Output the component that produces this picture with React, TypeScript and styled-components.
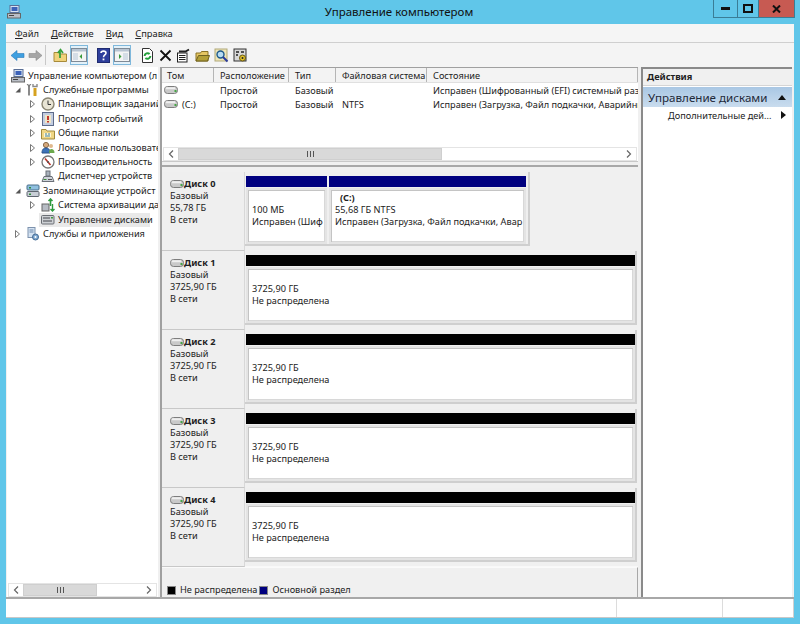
import React from "react";
import styled, { createGlobalStyle } from "styled-components";

const Global = createGlobalStyle`
  html, body { margin: 0; padding: 0; background: #5fc6e8; }
  * { box-sizing: border-box; }
`;

const Win = styled.div`
  width: 800px; height: 624px; background: #60c6e9; display: flex; flex-direction: column;
  font-family: "Noto Sans", "Liberation Sans", sans-serif; font-size: 9.2px; color: #222; overflow: hidden;
`;
const TitleBar = styled.div`
  height: 24px; flex: none; display: flex; align-items: flex-start; padding-left: 7px;
`;
const AppIcon = styled.div` margin-top: 5px; width: 14px; height: 14px; flex: none; `;
const Title = styled.div`
  flex: 1; text-align: center; font-size: 11.5px; line-height: 24px; color: #111; padding-left: 64px;
`;
const Caption = styled.div`
  display: flex; height: 18px; margin-right: 5px; border: 1px solid #3a7d96; border-top: 0; flex: none;
`;
const CapBtn = styled.div<{ $w: number; $close?: boolean }>`
  width: ${(p) => p.$w}px; display: flex; align-items: center; justify-content: center;
  background: ${(p) => (p.$close ? "#c75a52" : "transparent")};
  border-left: 1px solid #3a7d96;
  &:first-child { border-left: 0; }
`;
const Client = styled.div`
  flex: 1; margin: 0 6px 6px; background: #f0f0f0; display: flex; flex-direction: column; min-height: 0;
`;
const MenuBar = styled.div`
  height: 19px; flex: none; background: #f5f5f5; border-bottom: 1px solid #cfcfcf; display: flex; align-items: center; padding-left: 9px; gap: 12px;
  font-size: 9.3px; padding-top: 1px;
`;
const MenuItem = styled.span` u { text-decoration: underline; text-underline-offset: 1px; } `;
const Toolbar = styled.div`
  height: 24px; flex: none; background: #f4f4f4; display: flex; align-items: center; padding-left: 2px;
`;
const ToolBtn = styled.div<{ $w?: number; $on?: boolean; $ml?: number }>`
  width: ${(p) => p.$w ?? 18}px; height: 20px; flex: none; display: flex; align-items: center; justify-content: center;
  margin-left: ${(p) => p.$ml ?? 0}px;
  ${(p) => (p.$on ? "background:#e3f1f9;border:1px solid #7fb8dc;" : "")}
`;
const ToolSep = styled.div<{ $ml: number; $mr: number }>`
  width: 1px; height: 20px; background: #c8c8c8; flex: none; margin-left: ${(p) => p.$ml}px; margin-right: ${(p) => p.$mr}px;
`;
const Main = styled.div`
  flex: 1; min-height: 0; display: flex; background: #f0f0f0; border-bottom: 2px solid #a8a8a8;
`;
const TreePane = styled.div`
  width: 151px; flex: none; margin-left: 1px; background: #fff; display: flex; flex-direction: column;
`;
const TreeList = styled.div` flex: 1; padding-top: 1.5px; overflow: hidden; `;
const TreeRow = styled.div<{ $level: number }>`
  height: 14.4px; display: flex; align-items: center; white-space: nowrap; overflow: hidden;
  padding-left: ${(p) => [4, 7, 22][p.$level]}px;
`;
const Twisty = styled.span`
  width: 7px; height: 14px; flex: none; display: flex; align-items: center; justify-content: center; margin-right: 5px;
`;
const TreeIcon = styled.span` width: 14px; height: 14px; flex: none; display: flex; align-items: center; justify-content: center; margin-right: 2px; `;
const TreeLabel = styled.span` line-height: 14px; padding: 0 3px 0 1px; `;
const Selected = styled.span`
  display: flex; align-items: center; background: #e9e9e9; margin-left: -2px; padding-left: 2px; height: 14px; width: 111px;
`;
const HScroll = styled.div`
  height: 14px; flex: none; display: flex; background: #fff; border: 1px solid #e4e4e4; margin: 0 1px;
`;
const ScrollBtn = styled.div`
  width: 14px; flex: none; display: flex; align-items: center; justify-content: center; background: #fff;
`;
const Thumb = styled.div<{ $w: number }>`
  width: ${(p) => p.$w}px; flex: none; background: #d9d9d9; border: 1px solid #cfcfcf; display: flex; align-items: center; justify-content: center;
`;
const Track = styled.div` flex: 1; background: #fff; `;
const Grip = styled.div`
  width: 7px; height: 6px; background: repeating-linear-gradient(90deg, #555 0 1px, transparent 1px 3px);
`;
const MiddlePane = styled.div`
  width: 478px; flex: none; margin-left: 2px; display: flex; flex-direction: column; border-left: 2px solid #a0a0a0; border-top: 1px solid #a0a0a0;
`;
const ListPane = styled.div` height: 93px; flex: none; background: #fff; display: flex; flex-direction: column; `;
const HeaderRow = styled.div` height: 15px; flex: none; display: flex; background: #f3f3f3; border-bottom: 1px solid #e0e0e0; `;
const HeadCell = styled.div<{ $w: number }>`
  width: ${(p) => p.$w}px; flex: none; padding-left: 6px; line-height: 15px; border-right: 1px solid #b5b5b5; white-space: nowrap; overflow: hidden;
  &:first-child { padding-left: 5px; }
`;
const Rows = styled.div` flex: 1; `;
const Row = styled.div` height: 14px; display: flex; align-items: center; `;
const Cell = styled.div<{ $w: number }>`
  width: ${(p) => p.$w}px; flex: none; padding-left: 6px; display: flex; align-items: center; gap: 4px; white-space: nowrap; overflow: hidden;
`;
const VolCell = styled(Cell)` padding-left: 2px; `;
const Splitter = styled.div`
  height: 6px; flex: none; background: #f0f0f0; border-top: 1px solid #c8c8c8; border-bottom: 2px solid #a8a8a8;
`;
const Graph = styled.div` height: 400px; flex: none; padding-top: 5px; background: #f0f0f0; border-bottom: 1px solid #f8f8f8; `;
const DiskRow = styled.div` height: 79px; display: flex; `;
const DiskLabel = styled.div`
  width: 83px; flex: none; padding: 6px 0 0 8px; line-height: 12.2px; border-bottom: 1px solid #c8c8c8; border-right: 1px solid #d8d8d8; background: #efefef;
`;
const DiskName = styled.div` display: flex; align-items: center; font-weight: 700; height: 11.5px; white-space: nowrap; `;
const Vols = styled.div<{ $w: number }>`
  width: ${(p) => p.$w}px; height: 74px; padding: 4px 0 0 1px; flex: none; display: flex; gap: 2px; background: #efefef; border-right: 2px solid #cfcfcf; border-bottom: 2px solid #cfcfcf;
`;
const Vol = styled.div<{ $w: number }>` width: ${(p) => p.$w}px; flex: none; display: flex; flex-direction: column; `;
const Bar = styled.div<{ $c: string }>` height: 11px; flex: none; background: ${(p) => p.$c}; `;
const VolBody = styled.div<{ $top: number }>`
  margin-top: 1px; height: 57px; background: #fff; border: 2px solid #e4e4e4; box-shadow: inset 1px 1px 0 #c4c4c4, inset -1px -1px 0 #d8d8d8;
  padding: ${(p) => p.$top}px 0 0 4px; display: flex; flex-direction: column; line-height: 12.2px; white-space: nowrap; overflow: hidden;
`;
const VolName = styled.div` font-weight: 700; padding-left: 5px; `;
const Legend = styled.div`
  flex: 1; display: flex; align-items: flex-end; padding: 0 0 1px 5px; background: #f0f0f0; border-right: 1px solid #a8a8a8; gap: 4px;
  border-top: 1px solid #fafafa;
`;
const Swatch = styled.div<{ $c: string; $ml?: number }>`
  width: 9px; height: 9px; background: ${(p) => p.$c}; border: 1px solid #888; margin-bottom: 1px; margin-left: ${(p) => p.$ml ?? 0}px;
`;
const LegendText = styled.span` line-height: 13px; `;
const ActionsPane = styled.div`
  flex: 1; margin-left: 3px; background: #fff; border-left: 2px solid #8a8a8a; border-top: 2px solid #8a8a8a; display: flex; flex-direction: column; margin-right: 2px;
`;
const ActHead = styled.div`
  height: 17px; background: #f0f0f0; font-weight: 700; padding-left: 4px; line-height: 15px; border-bottom: 1px solid #d5d5d5; flex: none;
`;
const ActSub = styled.div`
  height: 20px; margin-top: 1px; background: linear-gradient(#a9c7e4, #c9dcee); font-size: 11.6px; display: flex; align-items: center; justify-content: space-between; padding: 0 6px 0 5px; color: #1e2a3a; flex: none;
`;
const ActItem = styled.div`
  height: 16px; display: flex; align-items: center; justify-content: space-between; padding: 0 6px 0 25px;
`;
const StatusBar = styled.div`
  height: 19px; flex: none; background: #fff; display: flex; border-bottom: 1px solid #c8c8c8; border-right: 1px solid #d0d0d0;
`;
const StatusCell = styled.div<{ $w?: number }>`
  ${(p) => (p.$w ? `width:${p.$w}px;flex:none;` : "flex:1;")} border-right: 1px solid #dcdcdc;
  &:last-child { border-right: 0; }
`;

const Tri = ({ dir = "r" }: { dir?: "r" | "open" }) =>
  dir === "open" ? (
    <svg width="6" height="6" viewBox="0 0 6 6"><path d="M5.5 0.5V5.5H0.5Z" fill="#555" /></svg>
  ) : (
    <svg width="5" height="8" viewBox="0 0 5 8"><path d="M0.5 0.5L4.5 4L0.5 7.5Z" fill="#fff" stroke="#777" /></svg>
  );

const DiskIco = ({ w = 14 }: { w?: number }) => (
  <svg width={w} height="8" viewBox="0 0 14 8" style={{ flex: "none" }}>
    <rect x="0.5" y="0.5" width="13" height="7" rx="3" fill="#c9c9c9" stroke="#7d7d7d" />
    <rect x="1.5" y="1.3" width="10" height="2" rx="1" fill="#efefef" />
    <rect x="10.5" y="4" width="2" height="2" fill="#45a545" />
  </svg>
);

const Ic = ({ k }: { k: string }) => {
  const s = { width: 14, height: 14, viewBox: "0 0 14 14" };
  switch (k) {
    case "computer":
      return (
        <svg {...s}>
          <rect x="3" y="0.5" width="9" height="7" fill="#d8e4f2" stroke="#5a6f96" />
          <rect x="4.5" y="2" width="6" height="4" fill="#3c62b8" />
          <rect x="0.5" y="8.5" width="13" height="4.5" fill="#b9bec6" stroke="#666" />
          <rect x="2" y="10" width="5" height="1" fill="#444" />
        </svg>
      );
    case "tools":
      return (
        <svg {...s}>
          <path d="M3 1.5V12.5" stroke="#8a8a8a" strokeWidth="2" />
          <path d="M1 1L3 3.5L5 1" stroke="#777" fill="none" />
          <path d="M9 5V13" stroke="#d6a21f" strokeWidth="3" />
          <path d="M7 1V3.5H11V1" stroke="#8a8a8a" fill="none" strokeWidth="1.4" />
        </svg>
      );
    case "clock":
      return (
        <svg {...s}>
          <circle cx="7" cy="7" r="6" fill="#e8e4d4" stroke="#8b8672" strokeWidth="1.4" />
          <path d="M7 3.5V7.5H10" stroke="#333" fill="none" />
        </svg>
      );
    case "event":
      return (
        <svg {...s}>
          <rect x="1.5" y="0.5" width="11" height="13" fill="#c3cde0" stroke="#5d6b8a" />
          <rect x="4" y="3" width="6" height="8" fill="#f0e6c6" />
          <rect x="6" y="4" width="2" height="4" fill="#c2362e" />
          <rect x="6" y="9" width="2" height="1.5" fill="#c2362e" />
        </svg>
      );
    case "share":
      return (
        <svg {...s}>
          <path d="M0.5 3.5H5L6 5H13.5V13H0.5Z" fill="#f0d684" stroke="#a08a3e" />
          <rect x="3" y="7" width="7" height="4" fill="#fff6d0" />
          <path d="M4 8H6M7 8H9M4 10H9" stroke="#3a7fa0" />
        </svg>
      );
    case "users":
      return (
        <svg {...s}>
          <circle cx="5" cy="4" r="2.6" fill="#d6a97c" stroke="#8a6b4a" />
          <path d="M1 12C1 8 3 7 5 7S9 8 9 12Z" fill="#3d72b8" stroke="#2a5088" />
          <circle cx="10" cy="5" r="2" fill="#e0b88c" />
          <path d="M8 12C8 9 9 8 10.5 8S13.5 9 13.5 12Z" fill="#6ca84c" />
        </svg>
      );
    case "perf":
      return (
        <svg {...s}>
          <circle cx="7" cy="7" r="6" fill="#fff" stroke="#777" strokeWidth="1.3" />
          <path d="M4 3.5L9.5 10" stroke="#b8332a" strokeWidth="1.6" />
          <circle cx="7" cy="7" r="1" fill="#555" />
        </svg>
      );
    case "device":
      return (
        <svg {...s}>
          <path d="M1 12.5L3 7.5H11L13 12.5Z" fill="#cfd3da" stroke="#6b7078" />
          <rect x="5" y="2" width="4" height="5" fill="#a9b2bd" stroke="#6b7078" />
          <rect x="2.5" y="10" width="3" height="1" fill="#3a8a3a" />
          <rect x="7" y="10" width="4" height="1" fill="#555" />
        </svg>
      );
    case "storage":
      return (
        <svg {...s}>
          <rect x="1" y="1" width="12" height="5" rx="1" fill="#8fc0e0" stroke="#4a6f8a" />
          <rect x="1" y="7.5" width="12" height="5" rx="1" fill="#c8ced6" stroke="#5f6670" />
          <rect x="3" y="3" width="2" height="1.5" fill="#2f8a3c" />
          <rect x="3" y="9.5" width="2" height="1.5" fill="#2f8a3c" />
        </svg>
      );
    case "backup":
      return (
        <svg {...s}>
          <rect x="1" y="6" width="7" height="7" fill="#b7bcc4" stroke="#666" />
          <path d="M9.5 1V8M7.5 3L9.5 1L11.5 3" stroke="#2e9a3e" strokeWidth="1.6" fill="none" />
          <path d="M11.5 6V13M9.5 11L11.5 13L13.5 11" stroke="#2e9a3e" strokeWidth="1.4" fill="none" />
        </svg>
      );
    case "diskmgmt":
      return (
        <svg {...s}>
          <rect x="0.5" y="2.5" width="12.5" height="8.5" rx="1" fill="#cdd0d4" stroke="#6a6e74" />
          <path d="M2 5H9M2 8H11" stroke="#44474c" />
          <rect x="10" y="4" width="2" height="1.5" fill="#3e9a3e" />
        </svg>
      );
    case "services":
      return (
        <svg {...s}>
          <rect x="2" y="0.5" width="7" height="10" fill="#d5e3f2" stroke="#7d92ad" />
          <path d="M3.5 3H7.5M3.5 5H7.5" stroke="#6d88ac" />
          <circle cx="9.5" cy="10" r="3" fill="#7fa8d0" stroke="#456b95" />
          <circle cx="9.5" cy="10" r="1" fill="#fff" />
        </svg>
      );
    default:
      return null;
  }
};

const Tb = ({ k }: { k: string }) => {
  const s = { width: 15, height: 15, viewBox: "0 0 15 15" };
  switch (k) {
    case "back":
      return <svg {...s}><path d="M1 7.5L7 2.5V5.5H14V9.5H7V12.5Z" fill="#3e9fe0" stroke="#2a78b8" strokeWidth="0.6" /></svg>;
    case "fwd":
      return <svg {...s}><path d="M14 7.5L8 2.5V5.5H1V9.5H8V12.5Z" fill="#a6a6a6" stroke="#8a8a8a" strokeWidth="0.6" /></svg>;
    case "up":
      return (
        <svg {...s}>
          <path d="M1 4.5H6L7 6H13.5V13.5H1Z" fill="#f0d27a" stroke="#a78a3a" />
          <path d="M7 10V3.5M4.8 5L7.5 1.8L10 5" stroke="#38a03c" strokeWidth="1.8" fill="none" />
        </svg>
      );
    case "panelL":
      return (
        <svg width="16" height="14" viewBox="0 0 16 14">
          <rect x="0.5" y="0.5" width="15" height="13" fill="#f4f4f4" stroke="#7f8a96" />
          <rect x="1" y="1" width="14" height="2.5" fill="#b8c4d2" />
          <rect x="2" y="5" width="5" height="7" fill="#d5dde6" />
          <path d="M11 6L8.5 8.5L11 11Z" fill="#3a9a3a" />
        </svg>
      );
    case "panelR":
      return (
        <svg width="16" height="14" viewBox="0 0 16 14">
          <rect x="0.5" y="0.5" width="15" height="13" fill="#f4f4f4" stroke="#7f8a96" />
          <rect x="1" y="1" width="14" height="2.5" fill="#b8c4d2" />
          <rect x="9" y="5" width="5" height="7" fill="#d5dde6" />
          <path d="M5 6L7.5 8.5L5 11Z" fill="#3a9a3a" />
        </svg>
      );
    case "help":
      return (
        <svg width="13" height="15" viewBox="0 0 13 15">
          <rect x="0.5" y="0.5" width="12" height="14" fill="#2f3f9c" stroke="#1f2b70" />
          <path d="M4 5C4 2.5 9 2.5 9 5C9 7 6.5 7 6.5 9.3" stroke="#fff" strokeWidth="1.6" fill="none" />
          <rect x="5.6" y="10.5" width="1.8" height="1.8" fill="#fff" />
        </svg>
      );
    case "refresh":
      return (
        <svg {...s}>
          <path d="M2.5 0.5H9.5L12.5 3.5V14.5H2.5Z" fill="#fff" stroke="#333" />
          <path d="M4.6 8A3 3 0 0 1 9.6 6M10.4 8A3 3 0 0 1 5.4 10" stroke="#22a03a" strokeWidth="2" fill="none" />
        </svg>
      );
    case "x":
      return <svg {...s}><path d="M2.5 2.5L12.5 12.5M12.5 2.5L2.5 12.5" stroke="#111" strokeWidth="1.8" /></svg>;
    case "props":
      return (
        <svg {...s}>
          <rect x="1.5" y="5" width="9.5" height="9" fill="#fff" stroke="#222" />
          <path d="M3 3.5H9.5L13 1.5" stroke="#222" strokeWidth="2" fill="none" />
          <path d="M3 7.5H9.5M3 9.5H9.5M3 11.5H9.5" stroke="#222" />
        </svg>
      );
    case "open":
      return (
        <svg {...s}>
          <path d="M1 5H5.5L6.5 3.5H13V13H1Z" fill="#e5c664" stroke="#8a7326" />
          <path d="M1 13L3.5 7.5H14.5L12.5 13Z" fill="#b4a038" stroke="#6f6220" />
        </svg>
      );
    case "search":
      return (
        <svg {...s}>
          <rect x="1" y="1" width="12" height="12" fill="#efe6b8" stroke="#b0a878" />
          <circle cx="6.5" cy="6.5" r="3.5" fill="#b8dcf2" stroke="#1d5a8c" strokeWidth="1.4" />
          <path d="M9 9L13.5 13.5" stroke="#2a3a9c" strokeWidth="2" />
        </svg>
      );
    case "gear":
      return (
        <svg {...s}>
          <rect x="1" y="1" width="12" height="12" fill="#d8d8d8" stroke="#333" />
          <path d="M3 4H6M8 4H11M3 7H5" stroke="#222" strokeWidth="1.4" />
          <circle cx="9.5" cy="10" r="3" fill="#e0c02a" stroke="#6a5a10" />
          <circle cx="9.5" cy="10" r="1" fill="#222" />
        </svg>
      );
    default:
      return null;
  }
};

const Chevron = ({ left }: { left?: boolean }) => (
  <svg width="6" height="8" viewBox="0 0 6 8">
    <path d={left ? "M5 0.5L1.5 4L5 7.5" : "M1 0.5L4.5 4L1 7.5"} stroke="#666" strokeWidth="1.2" fill="none" />
  </svg>
);

const tree: { level: number; tw?: "r" | "open"; icon: string; label: string; sel?: boolean }[] = [
  { level: 0, icon: "computer", label: "Управление компьютером (л" },
  { level: 1, tw: "open", icon: "tools", label: "Служебные программы" },
  { level: 2, tw: "r", icon: "clock", label: "Планировщик заданий" },
  { level: 2, tw: "r", icon: "event", label: "Просмотр событий" },
  { level: 2, tw: "r", icon: "share", label: "Общие папки" },
  { level: 2, tw: "r", icon: "users", label: "Локальные пользовате" },
  { level: 2, tw: "r", icon: "perf", label: "Производительность" },
  { level: 2, icon: "device", label: "Диспетчер устройств" },
  { level: 1, tw: "open", icon: "storage", label: "Запоминающие устройст" },
  { level: 2, tw: "r", icon: "backup", label: "Система архивации да" },
  { level: 2, icon: "diskmgmt", label: "Управление дисками", sel: true },
  { level: 1, tw: "r", icon: "services", label: "Службы и приложения" },
];

const widths = [52, 75, 47, 91, 211];
const heads = ["Том", "Расположение", "Тип", "Файловая система", "Состояние"];
const disks = [1, 2, 3, 4];

const DiskHead = ({ name, info }: { name: string; info: string }) => (
  <DiskLabel>
    <DiskName><DiskIco />{name}</DiskName>
    <div>Базовый</div>
    <div>{info}</div>
    <div>В сети</div>
  </DiskLabel>
);

export default function App() {
  return (
    <Win>
      <Global />
      <TitleBar>
        <AppIcon><Ic k="computer" /></AppIcon>
        <Title>Управление компьютером</Title>
        <Caption>
          <CapBtn $w={23}><svg width="9" height="3"><rect width="9" height="3" fill="#111" /></svg></CapBtn>
          <CapBtn $w={21}><svg width="10" height="9"><rect x="1" y="1" width="8" height="7" fill="none" stroke="#111" strokeWidth="2" /></svg></CapBtn>
          <CapBtn $w={36} $close><svg width="9" height="8"><path d="M1 0.5L8 7.5M8 0.5L1 7.5" stroke="#111" strokeWidth="2" /></svg></CapBtn>
        </Caption>
      </TitleBar>
      <Client>
        <MenuBar>
          <MenuItem><u>Ф</u>айл</MenuItem>
          <MenuItem><u>Д</u>ействие</MenuItem>
          <MenuItem><u>В</u>ид</MenuItem>
          <MenuItem><u>С</u>правка</MenuItem>
        </MenuBar>
        <Toolbar>
          <ToolBtn><Tb k="back" /></ToolBtn>
          <ToolBtn><Tb k="fwd" /></ToolBtn>
          <ToolSep $ml={1} $mr={5} />
          <ToolBtn><Tb k="up" /></ToolBtn>
          <ToolBtn $on $ml={1}><Tb k="panelL" /></ToolBtn>
          <ToolBtn $ml={8} $w={14}><Tb k="help" /></ToolBtn>
          <ToolBtn $on $ml={3}><Tb k="panelR" /></ToolBtn>
          <ToolBtn $ml={7}><Tb k="refresh" /></ToolBtn>
          <ToolBtn><Tb k="x" /></ToolBtn>
          <ToolBtn><Tb k="props" /></ToolBtn>
          <ToolBtn $ml={1}><Tb k="open" /></ToolBtn>
          <ToolBtn $ml={1}><Tb k="search" /></ToolBtn>
          <ToolBtn $ml={1}><Tb k="gear" /></ToolBtn>
        </Toolbar>
        <Main>
          <TreePane>
            <TreeList>
              {tree.map((t) => (
                <TreeRow key={t.label} $level={t.level}>
                  {t.level > 0 && <Twisty>{t.tw && <Tri dir={t.tw} />}</Twisty>}
                  {t.sel ? (
                    <Selected>
                      <TreeIcon><Ic k={t.icon} /></TreeIcon>
                      <TreeLabel>{t.label}</TreeLabel>
                    </Selected>
                  ) : (
                    <>
                      <TreeIcon><Ic k={t.icon} /></TreeIcon>
                      <TreeLabel>{t.label}</TreeLabel>
                    </>
                  )}
                </TreeRow>
              ))}
            </TreeList>
            <HScroll>
              <ScrollBtn><Chevron left /></ScrollBtn>
              <Thumb $w={74}><Grip /></Thumb>
              <Track />
              <ScrollBtn><Chevron /></ScrollBtn>
            </HScroll>
          </TreePane>
          <MiddlePane>
            <ListPane>
              <HeaderRow>
                {heads.map((h, i) => <HeadCell key={h} $w={widths[i]}>{h}</HeadCell>)}
              </HeaderRow>
              <Rows>
                <Row>
                  <VolCell $w={widths[0]}><DiskIco /></VolCell>
                  <Cell $w={widths[1]}>Простой</Cell>
                  <Cell $w={widths[2]}>Базовый</Cell>
                  <Cell $w={widths[3]} />
                  <Cell $w={widths[4]}>Исправен (Шифрованный (EFI) системный раз</Cell>
                </Row>
                <Row>
                  <VolCell $w={widths[0]}><DiskIco /> (C:)</VolCell>
                  <Cell $w={widths[1]}>Простой</Cell>
                  <Cell $w={widths[2]}>Базовый</Cell>
                  <Cell $w={widths[3]}>NTFS</Cell>
                  <Cell $w={widths[4]}>Исправен (Загрузка, Файл подкачки, Аварийнь</Cell>
                </Row>
              </Rows>
              <HScroll>
                <ScrollBtn><Chevron left /></ScrollBtn>
                <Thumb $w={264}><Grip /></Thumb>
                <Track />
                <ScrollBtn><Chevron /></ScrollBtn>
              </HScroll>
            </ListPane>
            <Splitter />
            <Graph>
              <DiskRow>
                <DiskHead name="Диск 0" info="55,78 ГБ" />
                <Vols $w={285}>
                  <Vol $w={81}>
                    <Bar $c="#00007f" />
                    <VolBody $top={14}>
                      <div>100 МБ</div>
                      <div>Исправен (Шиф</div>
                    </VolBody>
                  </Vol>
                  <Vol $w={197}>
                    <Bar $c="#00007f" />
                    <VolBody $top={2}>
                      <VolName>(C:)</VolName>
                      <div>55,68 ГБ NTFS</div>
                      <div>Исправен (Загрузка, Файл подкачки, Авар</div>
                    </VolBody>
                  </Vol>
                </Vols>
              </DiskRow>
              {disks.map((n) => (
                <DiskRow key={n}>
                  <DiskHead name={`Диск ${n}`} info="3725,90 ГБ" />
                  <Vols $w={392}>
                    <Vol $w={389}>
                      <Bar $c="#000" />
                      <VolBody $top={14}>
                        <div>3725,90 ГБ</div>
                        <div>Не распределена</div>
                      </VolBody>
                    </Vol>
                  </Vols>
                </DiskRow>
              ))}
            </Graph>
            <Legend>
              <Swatch $c="#000" />
              <LegendText>Не распределена</LegendText>
              <Swatch $c="#00007f" $ml={-2} />
              <LegendText>Основной раздел</LegendText>
            </Legend>
          </MiddlePane>
          <ActionsPane>
            <ActHead>Действия</ActHead>
            <ActSub>
              Управление дисками
              <svg width="8" height="5" viewBox="0 0 8 5"><path d="M4 0L8 5H0Z" fill="#111" /></svg>
            </ActSub>
            <ActItem>
              Дополнительные дей...
              <svg width="5" height="8" viewBox="0 0 5 8"><path d="M0 0L5 4L0 8Z" fill="#111" /></svg>
            </ActItem>
          </ActionsPane>
        </Main>
        <StatusBar>
          <StatusCell $w={611} />
          <StatusCell $w={106} />
          <StatusCell />
        </StatusBar>
      </Client>
    </Win>
  );
}
